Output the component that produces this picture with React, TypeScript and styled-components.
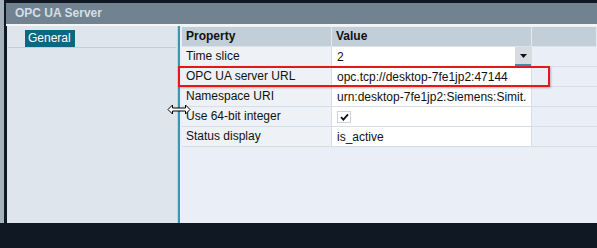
import React from "react";
import styled, { createGlobalStyle } from "styled-components";

const GlobalStyle = createGlobalStyle`
  html, body {
    margin: 0;
    padding: 0;
    background: #101923;
    font-family: "Liberation Sans", Arial, sans-serif;
  }
`;

interface PropRowI {
  name: string;
  value: React.ReactNode;
  dropdown?: boolean;
}

const rows: PropRowI[] = [
  { name: "Time slice", value: "2", dropdown: true },
  { name: "OPC UA server URL", value: "opc.tcp://desktop-7fe1jp2:47144" },
  { name: "Namespace URI", value: "urn:desktop-7fe1jp2:Siemens:Simit." },
  { name: "Use 64-bit integer", value: "check" },
  { name: "Status display", value: "is_active" },
];

const CheckMark = () => (
  <StyledCheck>
    <svg width="9" height="8" viewBox="0 0 9 8">
      <path d="M1 4.2 L3.4 6.6 L8 1.4" fill="none" stroke="#111" strokeWidth="1.8" />
    </svg>
  </StyledCheck>
);

const ResizeCursor = () => (
  <StyledCursor>
    <svg width="24" height="11" viewBox="0 0 24 11">
      <path
        d="M1 5.5 L5.5 1 L5.5 4 L18.5 4 L18.5 1 L23 5.5 L18.5 10 L18.5 7 L5.5 7 L5.5 10 Z"
        fill="#fff"
        stroke="#000"
        strokeWidth="1"
        strokeLinejoin="miter"
      />
    </svg>
  </StyledCursor>
);

const App: React.FC = () => (
  <>
    <GlobalStyle />
    <Screen>
      <EdgeStrip />
      <Window>
        <TitleBar>OPC UA Server</TitleBar>
        <Divider />
        <Content>
          <Sidebar>
            <NavItem>
              <NavLabel active>General</NavLabel>
            </NavItem>
          </Sidebar>
          <Splitter />
          <Main>
            <Table>
              <Row>
                <HeadCell>Property</HeadCell>
                <HeadCell>Value</HeadCell>
                <HeadCell />
              </Row>
              {rows.map((r) => (
                <Row key={r.name}>
                  <NameCell>{r.name}</NameCell>
                  <ValueCell>
                    {r.value === "check" ? <CheckMark /> : r.value}
                    {r.dropdown && (
                      <DropButton>
                        <svg width="7" height="4" viewBox="0 0 7 4">
                          <path d="M0 0 H7 L3.5 4 Z" fill="#111" />
                        </svg>
                      </DropButton>
                    )}
                  </ValueCell>
                  <EmptyCell />
                </Row>
              ))}
            </Table>
            <Highlight />
          </Main>
          <ResizeCursor />
        </Content>
      </Window>
    </Screen>
  </>
);

export default App;

const Screen = styled.div`
  display: flex;
  width: 597px;
  height: 248px;
  background: #101923;
  overflow: hidden;
`;

const EdgeStrip = styled.div`
  width: 4px;
  height: 223px;
  background: #a6b2be;
`;

const Window = styled.div`
  display: flex;
  flex-direction: column;
  flex: 1;
  margin-left: 2px;
  padding-top: 3px;
  height: 223px;
  box-sizing: border-box;
`;

const TitleBar = styled.div`
  height: 21px;
  line-height: 21px;
  background: #718391;
  color: #d6dee5;
  font-size: 12px;
  font-weight: bold;
  padding-left: 9px;
`;

const Divider = styled.div`
  height: 2px;
  background: #f3f5f7;
`;

const Content = styled.div`
  position: relative;
  display: flex;
  flex: 1;
  padding-left: 1px;
  background: #101923;
`;

const Sidebar = styled.div`
  width: 170px;
  background: #dfe5ed;
  border-right: 1px solid #c9d2dc;
  padding-top: 2px;
`;

const NavItem = styled.div`
  margin: 0 1px;
  padding-left: 17px;
  border-bottom: 1px solid #c3cdd8;
`;

const NavLabel = styled.span<{ active?: boolean }>`
  display: inline-block;
  height: 17px;
  line-height: 17px;
  padding: 0 4px 0 3px;
  font-size: 12px;
  background: ${(p) => (p.active ? "#0d6682" : "transparent")};
  color: ${(p) => (p.active ? "#ffffff" : "#111")};
`;

const Splitter = styled.div`
  width: 2px;
  background: #3f95b1;
`;

const Main = styled.div`
  position: relative;
  flex: 1;
  background: #eaeef6;
  padding: 1px 0 0 2px;
`;

const Table = styled.div`
  display: flex;
  flex-direction: column;
`;

const Row = styled.div`
  display: grid;
  grid-template-columns: 150px 200px 1fr;
  height: 20px;
`;

const HeadCell = styled.div`
  background: #c2cfd9;
  border-right: 1px solid #e4e9ee;
  border-bottom: 1px solid #dce3ea;
  padding-left: 4px;
  font-size: 12px;
  font-weight: bold;
  line-height: 19px;
  color: #111;
`;

const NameCell = styled.div`
  background: #eef1f6;
  border-right: 1px solid #d6dde6;
  border-bottom: 1px solid #d6dde6;
  padding-left: 4px;
  font-size: 12px;
  line-height: 19px;
  color: #111;
  white-space: nowrap;
`;

const ValueCell = styled.div`
  position: relative;
  display: flex;
  align-items: center;
  background: #ffffff;
  border-right: 1px solid #d6dde6;
  border-bottom: 1px solid #d6dde6;
  padding-left: 5px;
  font-size: 12px;
  color: #111;
  white-space: nowrap;
  overflow: hidden;
`;

const EmptyCell = styled.div`
  border-bottom: 1px solid #d6dde6;
`;

const DropButton = styled.div`
  position: absolute;
  right: 0;
  top: 0;
  bottom: 0;
  width: 16px;
  display: flex;
  align-items: center;
  justify-content: center;
  background: #d6dce2;
  border-bottom: 2px solid #3c8fae;
  box-sizing: border-box;
`;

const StyledCheck = styled.span`
  display: inline-flex;
  align-items: center;
  justify-content: center;
  width: 12px;
  height: 10px;
  border: 1px solid #cdd3da;
  background: #fff;
`;

const Highlight = styled.div`
  position: absolute;
  left: -2px;
  top: 40px;
  width: 368px;
  height: 17px;
  border: 2px solid #e5161c;
  box-shadow: 1px 1px 2px rgba(0, 0, 0, 0.25);
  pointer-events: none;
`;

const StyledCursor = styled.div`
  position: absolute;
  left: 161px;
  top: 78px;
  line-height: 0;
`;
